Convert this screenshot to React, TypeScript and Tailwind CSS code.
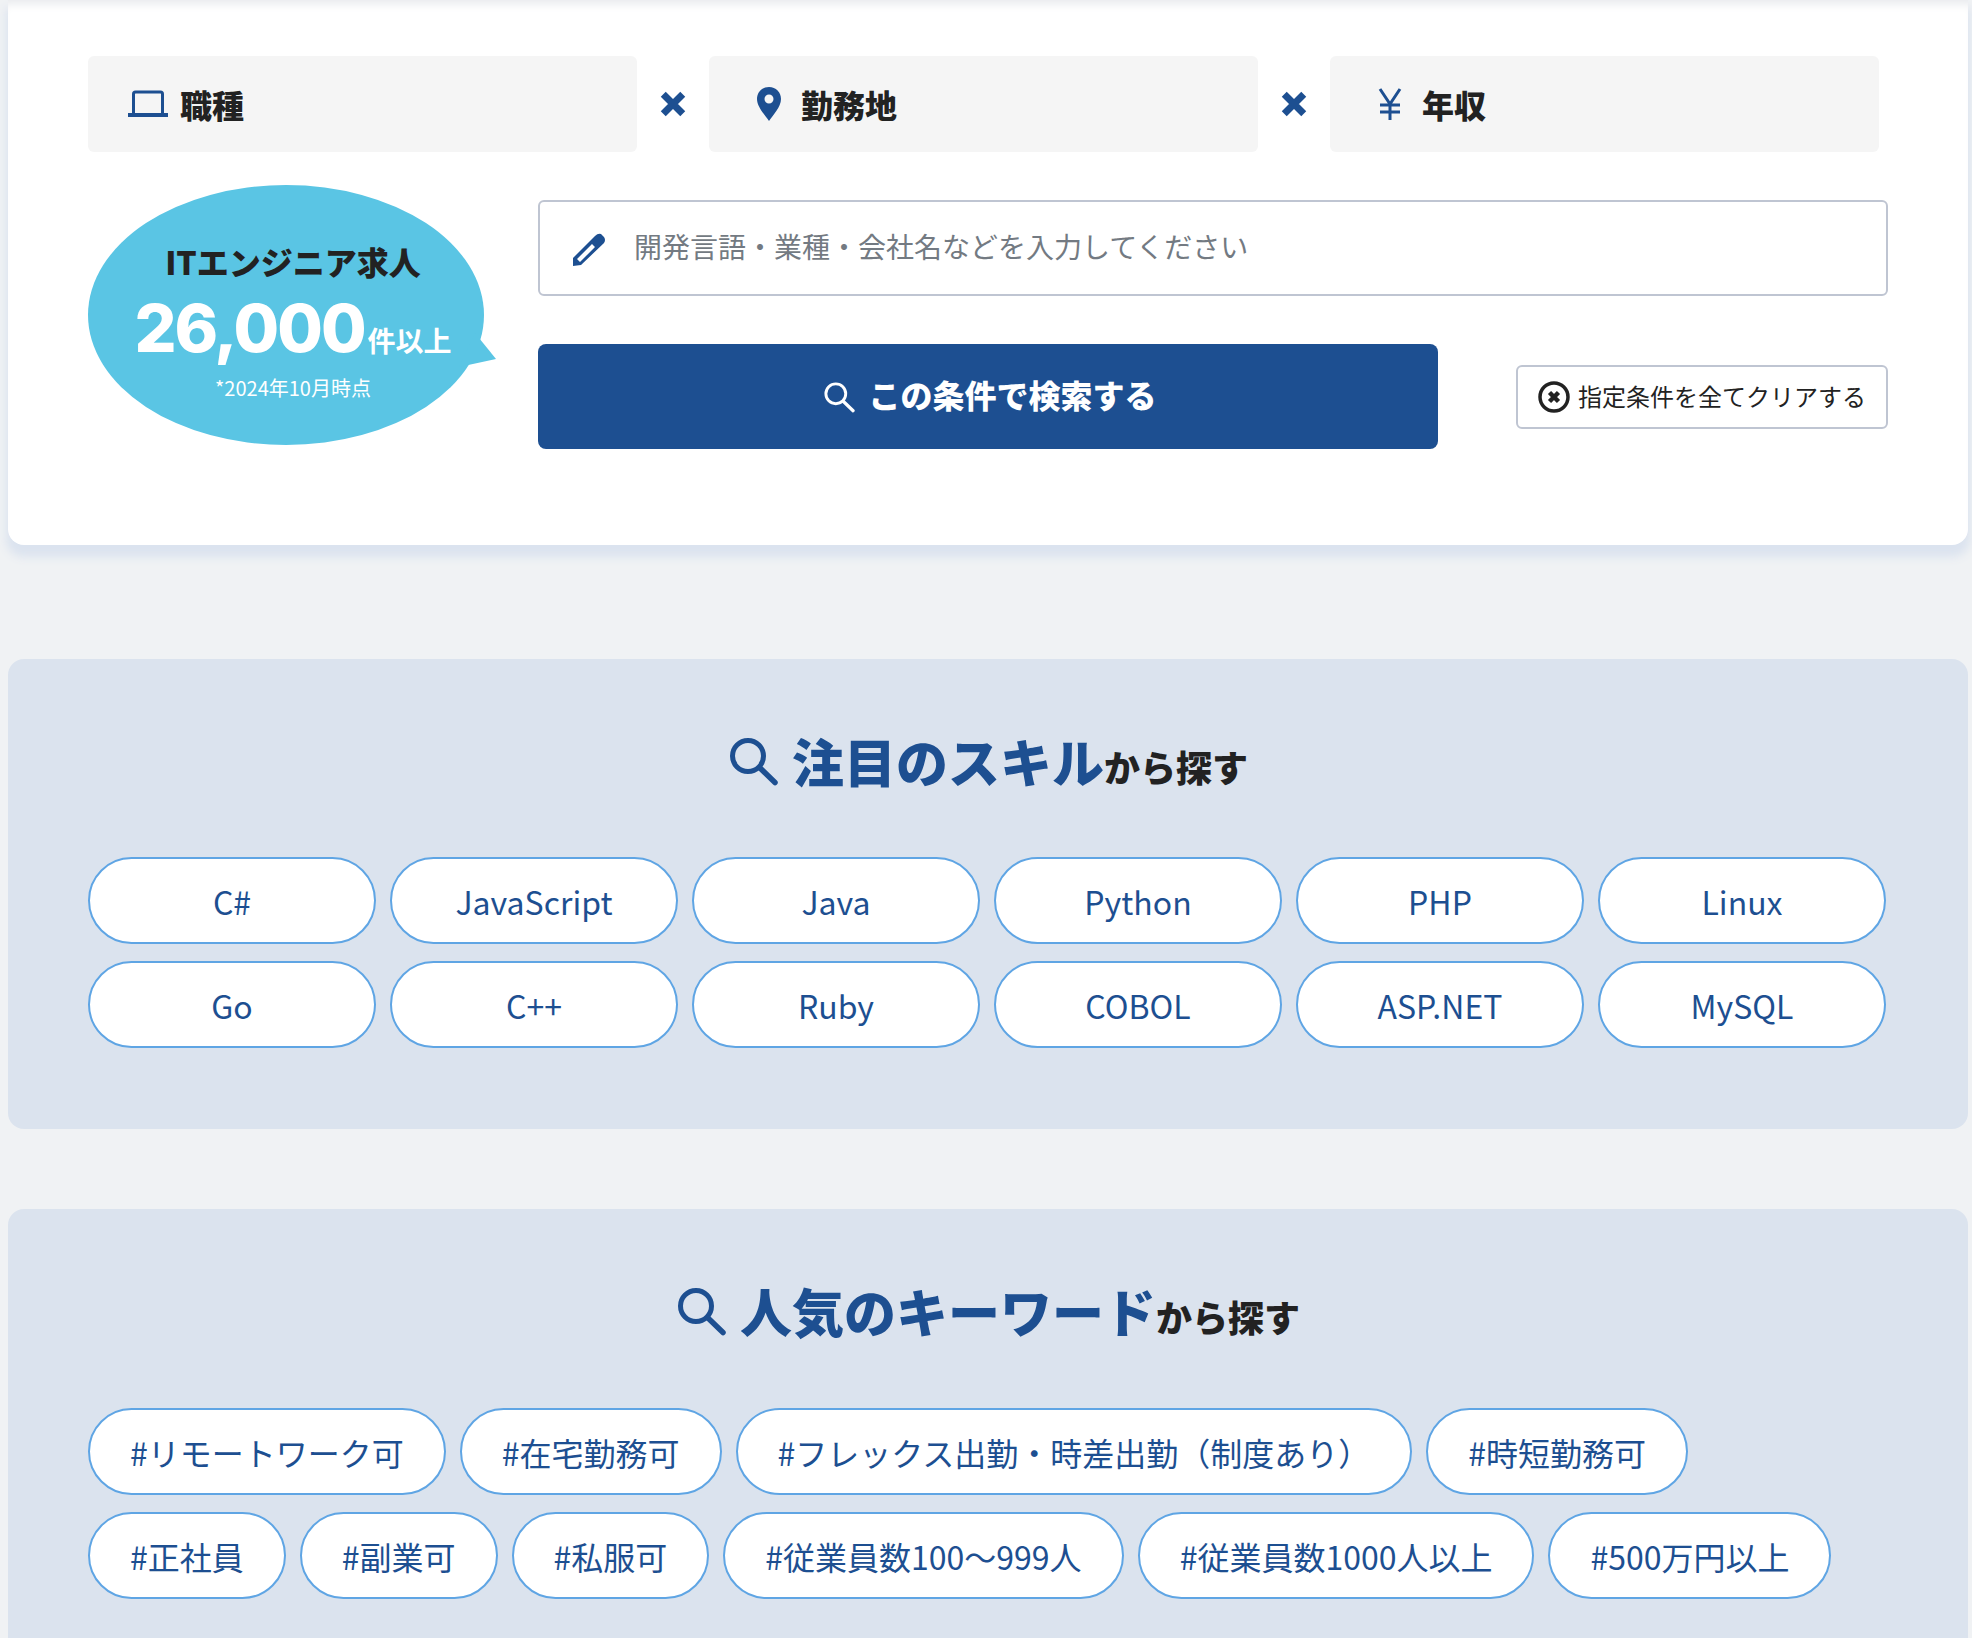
import React from "react";

const NAVY = "#1d4f91";

function SearchIcon({ className, stroke = NAVY, sw = 5 }: { className: string; stroke?: string; sw?: number }) {
  return (
    <svg viewBox="0 0 50 50" className={className} fill="none" stroke={stroke} strokeWidth={sw}>
      <circle cx="20" cy="20" r="15.5" />
      <path d="M32 32 L47 46.5" strokeWidth={sw + 0.5} strokeLinecap="round" />
    </svg>
  );
}

function Cross() {
  return (
    <svg viewBox="0 0 24 24" className="w-[26px] h-[26px] shrink-0" stroke={NAVY} strokeWidth="6.5" fill="none">
      <path d="M3 3 L21 21 M21 3 L3 21" />
    </svg>
  );
}

const skills = ["C#", "JavaScript", "Java", "Python", "PHP", "Linux", "Go", "C++", "Ruby", "COBOL", "ASP.NET", "MySQL"];
const row1 = ["#リモートワーク可", "#在宅勤務可", "#フレックス出勤・時差出勤（制度あり）", "#時短勤務可"];
const row2 = ["#正社員", "#副業可", "#私服可", "#従業員数100〜999人", "#従業員数1000人以上", "#500万円以上"];

function Pill({ label, wide }: { label: string; wide?: boolean }) {
  return (
    <a className={`h-[87px] flex items-center justify-center bg-white border-2 border-[#5fa5e4] rounded-full text-[#1d4f91] text-[32px] leading-none whitespace-nowrap ${wide ? "px-[40px]" : ""}`}>
      {label}
    </a>
  );
}

function Heading({ main }: { main: string }) {
  return (
    <h2 className="flex items-center justify-center font-black h-[70px]">
      <SearchIcon className="w-[50px] h-[50px] mr-[14px]" />
      <span className="text-[#1d4f91] text-[52px] leading-none">{main}</span>
      <span className="text-[#222222] text-[36px] leading-none mt-[10px]">から探す</span>
    </h2>
  );
}

function Field({ icon, label, pad, gap }: { icon: React.ReactNode; label: string; pad: string; gap: string }) {
  return (
    <div className={`w-[549px] h-[96px] bg-[#f5f5f5] rounded-md flex items-center ${pad} ${gap}`}>
      {icon}
      <span className="text-[32px] font-black text-[#222222] leading-none">{label}</span>
    </div>
  );
}

export default function App() {
  return (
    <div className="bg-[#f0f2f4] h-[1638px] overflow-hidden pl-2 pr-1" style={{ fontFamily: '"Noto Sans CJK JP", "Noto Sans", sans-serif' }}>
      <section className="bg-white rounded-b-2xl h-[545px] pl-[80px] pr-[80px] pt-[56px] shadow-[0_10px_10px_2px_#dbe3ef,inset_0_10px_10px_-6px_#e8eaed]">
        <div className="flex items-center justify-between w-[1791px]">
          <Field
            pad="pl-[40px]"
            gap="gap-3"
            label="職種"
            icon={
              <svg viewBox="0 0 40 28" className="w-10 h-7" fill="none" stroke={NAVY}>
                <path d="M5.5 24 V4 Q5.5 2 7.5 2 H32.5 Q34.5 2 34.5 4 V24" strokeWidth="3" />
                <path d="M0 25 H40" strokeWidth="4" />
              </svg>
            }
          />
          <Cross />
          <Field
            pad="pl-[48px]"
            gap="gap-5"
            label="勤務地"
            icon={
              <svg viewBox="0 0 24 34" className="w-6 h-[34px]">
                <path fillRule="evenodd" fill={NAVY} d="M12 0 C5 0 0 5 0 12 C0 20 8 28 12 34 C16 28 24 20 24 12 C24 5 19 0 12 0 Z M12 7.5 A4.5 4.5 0 1 1 12 16.5 A4.5 4.5 0 1 1 12 7.5 Z" />
              </svg>
            }
          />
          <Cross />
          <Field
            pad="pl-[48px]"
            gap="gap-5"
            label="年収"
            icon={
              <svg viewBox="0 0 24 32" className="w-6 h-8" fill="none" stroke={NAVY} strokeWidth="3">
                <path d="M2 1 L12 16 L22 1 M12 16 V32 M2 17 H22 M2 24 H22" />
              </svg>
            }
          />
        </div>

        <div className="flex mt-[33px]">
          <div className="relative w-[396px] h-[260px] shrink-0 mr-[54px]">
            <div className="absolute inset-0 rounded-[50%] bg-[#5ac5e4]" />
            <svg viewBox="0 0 40 40" className="absolute left-[368px] top-[145px] w-10 h-10">
              <path d="M19 3 L40 29 L3 37 Z" fill="#5ac5e4" />
            </svg>
            <div className="relative flex flex-col items-center pt-[60px] pl-[14px]">
              <p className="text-[32px] font-black text-[#222222] leading-none whitespace-nowrap">ITエンジニア求人</p>
              <p className="flex items-baseline text-white font-bold mt-[18px] leading-none whitespace-nowrap">
                <span className="text-[66px] font-extrabold tracking-[-2px] leading-none" style={{ fontFamily: 'Inter, sans-serif' }}>26,000</span>
                <span className="text-[28px] ml-[3px] leading-none">件以上</span>
              </p>
              <p className="text-white text-[20px] leading-none mt-[17px] whitespace-nowrap">*2024年10月時点</p>
            </div>
          </div>

          <div className="w-[1350px] pt-[15px]">
            <div className="h-[96px] border-2 border-[#bfc5d2] rounded-md flex items-center pl-[32px]">
              <svg viewBox="0 0 34 36" className="w-[34px] h-9 mr-[28px]">
                <path fillRule="evenodd" fill={NAVY} d="M1 36 L1 28 L23 6 Q26 3 29 4 L32 7 Q34 10 32 13 L9 35 Z M5 29 L20 14 L23 17 L8 32 Z" />
              </svg>
              <span className="text-[28px] text-[#737a82] leading-none mb-[4px]">開発言語・業種・会社名などを入力してください</span>
            </div>
            <div className="flex items-center justify-between mt-[48px]">
              <button className="w-[900px] h-[105px] bg-[#1d4f91] rounded-lg flex items-center justify-center text-white pl-[4px]">
                <SearchIcon className="w-[32px] h-[32px] mr-[13px]" stroke="#ffffff" sw={4.5} />
                <span className="text-[32px] font-black leading-none mb-[6px]">この条件で検索する</span>
              </button>
              <button className="w-[372px] h-[64px] border-2 border-[#bfc5d2] rounded-md flex items-center pl-[20px] gap-[8px] text-[#222222] bg-white">
                <svg viewBox="0 0 32 32" className="w-8 h-8 shrink-0" fill="none" stroke="#222222">
                  <circle cx="16" cy="16" r="14" strokeWidth="3.5" />
                  <path d="M11.5 11.5 L20.5 20.5 M20.5 11.5 L11.5 20.5" strokeWidth="4.5" />
                </svg>
                <span className="text-[24px] leading-none whitespace-nowrap mb-[2px]">指定条件を全てクリアする</span>
              </button>
            </div>
          </div>
        </div>
      </section>

      <section className="mt-[114px] h-[470px] bg-[#dbe3ee] rounded-2xl px-[80px] pt-[67px]">
        <Heading main="注目のスキル" />
        <div className="grid grid-cols-[repeat(6,288px)] gap-x-[14px] gap-y-[17px] mt-[61px]">
          {skills.map((s) => (
            <Pill key={s} label={s} />
          ))}
        </div>
      </section>

      <section className="mt-[80px] h-[500px] bg-[#dbe3ee] rounded-2xl px-[80px] pt-[67px]">
        <Heading main="人気のキーワード" />
        <div className="flex gap-x-[14px] mt-[62px]">
          {row1.map((s) => (
            <Pill key={s} label={s} wide />
          ))}
        </div>
        <div className="flex gap-x-[14px] mt-[17px]">
          {row2.map((s) => (
            <Pill key={s} label={s} wide />
          ))}
        </div>
      </section>
    </div>
  );
}
